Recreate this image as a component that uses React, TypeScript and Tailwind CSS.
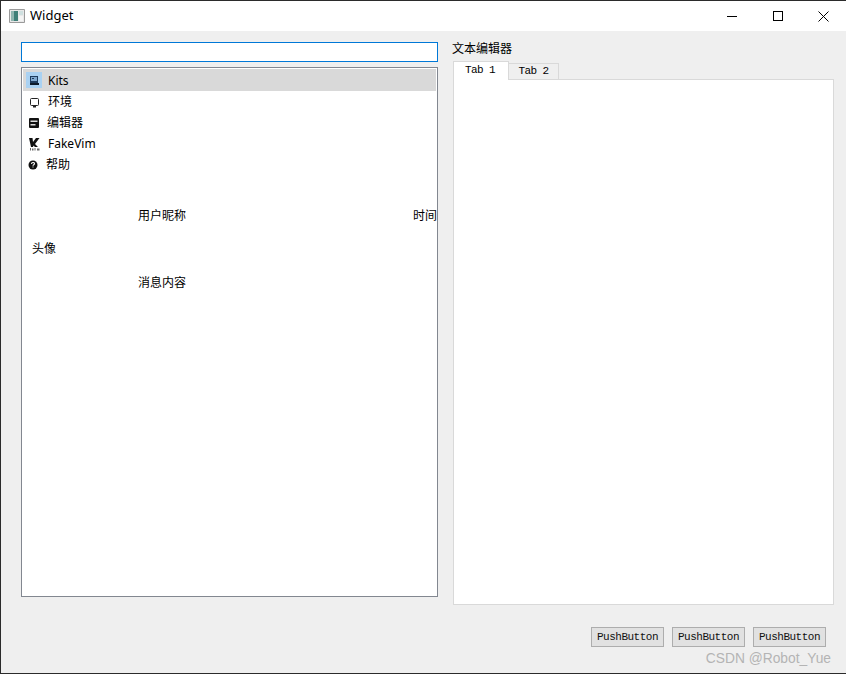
const CJK = "font-['Segoe_UI','Liberation_Sans','Noto_Sans_CJK_SC',sans-serif]";

// Qt Creator style sidebar icons, 16x16
function KitsIcon() {
  return (
    <svg width="16" height="16" viewBox="0 0 16 16" className="bg-[#a9d1f2]">
      <path d="M4 4h8v8H4z" fill="#1c3a5c" />
      <path d="M5 5h6v4H5z" fill="#7fa8cf" />
      <path d="M6 6h2v1H6z" fill="#1c3a5c" />
      <path d="M4 11h9v2H4z" fill="#0c1a2a" />
    </svg>
  );
}

function MonitorIcon() {
  return (
    <svg width="16" height="16" viewBox="0 0 16 16">
      <rect x="4.500" y="4.500" width="8" height="7" rx="1" fill="#fff" stroke="#222" strokeWidth="1" />
      <path d="M7 12h3v1.500H7z" fill="#222" />
    </svg>
  );
}

function EditorIcon() {
  return (
    <svg width="16" height="16" viewBox="0 0 16 16">
      <rect x="3" y="3" width="10" height="10" rx="1" fill="#111" />
      <path d="M4.500 5.500h7v1.500h-7zM4.500 9h5v1.500h-5z" fill="#ddd" />
    </svg>
  );
}

function FakeVimIcon() {
  return (
    <svg width="16" height="16" viewBox="0 0 16 16">
      <path d="M3 2h3.500l.5 4 3-4h3.500L9 8l3 3H9L7.500 9.500 7 11H5z" fill="#111" />
      <path d="M4 12h1v2.500H4zM6 12.500h1.500v2H6zM8.500 12h1v2.500h-1zM11 12.500h2.500v2H11z" fill="#666" />
    </svg>
  );
}

function HelpIcon() {
  return (
    <svg width="16" height="16" viewBox="0 0 16 16">
      <circle cx="7" cy="8" r="4.500" fill="#111" />
      <path d="M5.500 7c0-2 3-2 3-.2 0 1-1.500 1-1.500 2" fill="none" stroke="#fff" strokeWidth="1.100" />
      <path d="M6.500 9.600h1v1h-1z" fill="#fff" />
    </svg>
  );
}

function WindowIcon() {
  return (
    <svg width="16" height="14" viewBox="0 0 16 14">
      <path d="M.5.500h15v13H.5z" fill="#e8e8e8" stroke="#9a9a9a" />
      <path d="M2 2h7v10H2z" fill="#3f7f78" />
      <path d="M2 2h3v10H2z" fill="#8fb5b0" />
      <path d="M10 2h4v4h-4z" fill="#cfe0e0" />
      <path d="M10 7h4v5h-4z" fill="#f4f4f4" />
    </svg>
  );
}

const navItems = [
  { label: '环境', icon: <MonitorIcon />, textClass: 'ml-[6px]' },
  { label: '编辑器', icon: <EditorIcon />, textClass: 'ml-[5px]' },
  { label: 'FakeVim', icon: <FakeVimIcon />, textClass: "ml-[6px] font-['Noto_Sans',sans-serif]" },
  { label: '帮助', icon: <HelpIcon />, textClass: 'ml-[4px]' },
];

function PushButton() {
  return (
    <button className="w-[73px] h-[20px] flex items-center justify-center bg-[#e1e1e1] border border-[#adadad] font-['Liberation_Mono',monospace] text-[11px] tracking-[-0.5px] text-[#111]">
      PushButton
    </button>
  );
}

export default function App() {
  return (
    <div className={`relative w-[846px] h-[674px] flex flex-col bg-[#efefef] border-t border-l border-b border-[#2b2b2b] ${CJK} text-[12px] text-black overflow-hidden`}>
      {/* Title bar */}
      <div className="h-[30px] shrink-0 bg-white flex items-center">
        <div className="ml-[8px]">
          <WindowIcon />
        </div>
        <span className="ml-[5px] text-[13px] font-['Noto_Sans',sans-serif]">Widget</span>
        <div className="ml-auto flex items-center">
          <div className="w-[46px] h-[30px] flex items-center justify-center">
            <div className="w-[10px] h-px bg-black" />
          </div>
          <div className="w-[46px] h-[30px] flex items-center justify-center">
            <div className="w-[10px] h-[10px] border border-black" />
          </div>
          <div className="w-[45px] h-[30px] flex items-center justify-center">
            <svg width="11" height="11" viewBox="0 0 11 11">
              <path d="M.5.500l10 10M10.500.500l-10 10" stroke="#000" strokeWidth="1" fill="none" />
            </svg>
          </div>
        </div>
      </div>

      {/* Body */}
      <div className="flex items-start pt-[11px] pl-[20px]">
        <div className="w-[417px] flex flex-col gap-[5px]">
          <div className="h-[20px] bg-white border border-[#0078d7]" />
          <div className="h-[530px] bg-white border border-[#828790] p-px">
            <div className="h-[22px] flex items-center bg-[#d9d9d9] pl-[3px]">
              <KitsIcon />
              <span className="ml-[6px] mt-[2px] font-['Noto_Sans',sans-serif]">Kits</span>
            </div>
            {navItems.map((item) => (
              <div key={item.label} className="h-[21px] flex items-center pl-[3px]">
                {item.icon}
                <span className={item.textClass}>{item.label}</span>
              </div>
            ))}
            {/* Chat item */}
            <div className="mt-[24px] -mr-px grid grid-cols-[115px_1fr_auto] grid-rows-[33px_34px_33px] items-center">
              <span />
              <span>用户昵称</span>
              <span>时间</span>
              <span className="pl-[9px]">头像</span>
              <span />
              <span />
              <span />
              <span>消息内容</span>
              <span />
            </div>
          </div>
        </div>

        <div className="ml-[14px] w-[382px] flex flex-col">
          <div className="h-[19px] flex items-start leading-[14px]">文本编辑器</div>
          <div className="ml-px flex items-end h-[19px] font-['Liberation_Mono',monospace] text-[11px] tracking-[-0.6px] relative z-10">
            <div className="w-[56px] h-[19px] pb-[2px] pr-[2px] bg-white border border-b-0 border-[#d9d9d9] flex items-center justify-center">Tab 1</div>
            <div className="w-[50px] h-[17px] bg-[#efefef] border border-l-0 border-[#d9d9d9] flex items-center justify-center">Tab 2</div>
          </div>
          <div className="ml-px -mt-px w-[381px] h-[526px] bg-white border border-[#d9d9d9]" />
        </div>
      </div>

      {/* Button row */}
      <div className="mt-[22px] pr-[20px] flex justify-end gap-[8px]">
        <PushButton />
        <PushButton />
        <PushButton />
      </div>

      {/* Watermark */}
      <span className="absolute right-[15px] bottom-[6px] font-['Liberation_Sans',sans-serif] text-[13.8px] leading-[16px] text-[#b4b4b4]">CSDN @Robot_Yue</span>
    </div>
  );
}
